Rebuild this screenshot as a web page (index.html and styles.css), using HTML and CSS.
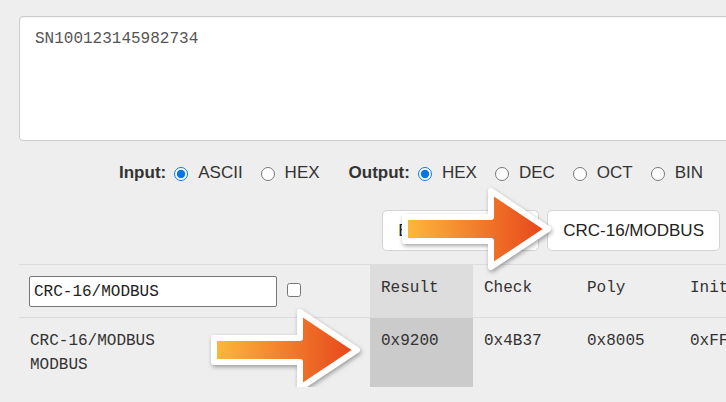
FILE: index.html
```html
<!DOCTYPE html>
<html lang="en">
<head>
<meta charset="utf-8">
<title>CRC Calculator</title>
<link rel="stylesheet" href="styles.css">
</head>
<body>
<div class="page">
  <textarea class="data-input" spellcheck="false">SN100123145982734</textarea>

  <div class="options">
    <div class="group">
      <span class="group-label">Input:</span>
      <label class="opt"><input type="radio" name="in" checked><span>ASCII</span></label>
      <label class="opt"><input type="radio" name="in"><span>HEX</span></label>
    </div>
    <div class="group">
      <span class="group-label">Output:</span>
      <label class="opt"><input type="radio" name="out" checked><span>HEX</span></label>
      <label class="opt"><input type="radio" name="out"><span>DEC</span></label>
      <label class="opt"><input type="radio" name="out"><span>OCT</span></label>
      <label class="opt"><input type="radio" name="out"><span>BIN</span></label>
    </div>
  </div>

  <div class="actions">
    <button class="btn btn-wide">Export Results</button>
    <button class="btn">CRC-16/MODBUS</button>
  </div>

  <table class="results">
    <colgroup>
      <col class="c-name"><col class="c-val"><col class="c-val"><col class="c-val"><col class="c-val"><col class="c-val">
    </colgroup>
    <thead>
      <tr>
        <th class="filter-cell"><div class="filter"><input class="filter-input" type="text" value="CRC-16/MODBUS"><input class="filter-check" type="checkbox"></div></th>
        <th class="hl-head">Result</th>
        <th>Check</th>
        <th>Poly</th>
        <th>Init</th>
        <th>RefIn</th>
      </tr>
    </thead>
    <tbody>
      <tr>
        <td>CRC-16/MODBUS<br>MODBUS</td>
        <td class="hl-cell">0x9200</td>
        <td>0x4B37</td>
        <td>0x8005</td>
        <td>0xFFFF</td>
        <td>true</td>
      </tr>
    </tbody>
  </table>

  <svg class="arrow arrow-top" width="157" height="90" viewBox="-7 -45 157 90" aria-hidden="true">
    <defs>
      <linearGradient id="ag1" x1="0" y1="0" x2="1" y2="0">
        <stop offset="0" stop-color="#fdb93c"/>
        <stop offset="1" stop-color="#e6431b"/>
      </linearGradient>
    </defs>
    <polygon points="0,-12 86,-12 86,-38 143,0 86,38 86,12 0,12" fill="url(#ag1)" stroke="#fff" stroke-width="6" stroke-linejoin="round"/>
  </svg>
  <svg class="arrow arrow-bottom" width="157" height="90" viewBox="-7 -45 157 90" aria-hidden="true">
    <defs>
      <linearGradient id="ag2" x1="0" y1="0" x2="1" y2="0">
        <stop offset="0" stop-color="#fdb93c"/>
        <stop offset="1" stop-color="#e6431b"/>
      </linearGradient>
    </defs>
    <polygon points="0,-12 86,-12 86,-38 143,0 86,38 86,12 0,12" fill="url(#ag2)" stroke="#fff" stroke-width="6" stroke-linejoin="round"/>
  </svg>
</div>
</body>
</html>
```

FILE: styles.css
```css
html, body {
  margin: 0;
  padding: 0;
  background: #eeeeee;
  overflow: hidden;
}

body {
  font-family: "Liberation Sans", Arial, sans-serif;
  color: #333;
}

.page {
  position: relative;
  width: 760px;
  margin-left: 19px;
  padding-top: 16px;
}

.data-input {
  display: block;
  box-sizing: border-box;
  width: 100%;
  height: 125px;
  margin: 0;
  padding: 10px 15px;
  border: 1px solid #cccccc;
  border-radius: 4px;
  background: #fff;
  font-family: "Liberation Mono", "DejaVu Sans Mono", monospace;
  font-size: 16px;
  line-height: 24px;
  color: #555;
  resize: none;
  box-shadow: inset 0 1px 1px rgba(0,0,0,0.05);
}

.options {
  display: flex;
  align-items: center;
  gap: 29px;
  padding-left: 100px;
  margin-top: 22px;
  font-size: 17px;
  line-height: 20px;
}

.group {
  display: flex;
  align-items: center;
  gap: 18px;
}

.group-label {
  font-weight: bold;
  margin-right: -10px;
}

.opt {
  display: flex;
  align-items: center;
  gap: 10px;
}

.opt input {
  width: 14px;
  height: 14px;
  margin: 1px 0 0 0;
  accent-color: #0b74e5;
}

.actions {
  display: flex;
  justify-content: flex-end;
  gap: 8px;
  padding-right: 59px;
  margin-top: 27px;
}

.btn {
  font-family: "Liberation Sans", Arial, sans-serif;
  font-size: 17px;
  line-height: 20px;
  color: #222;
  background: #fff;
  border: 1px solid #d4d4d4;
  border-radius: 5px;
  padding: 10px 15px;
  height: 41px;
}

.btn-wide {
  min-width: 157px;
  text-align: left;
}

.results {
  margin-top: 13px;
  border-collapse: collapse;
  table-layout: fixed;
  width: 866px;
  font-family: "Liberation Mono", "DejaVu Sans Mono", monospace;
  font-size: 16px;
  line-height: 24px;
  color: #333;
}

.c-name { width: 351px; }
.c-val { width: 103px; }

.results th,
.results td {
  text-align: left;
  vertical-align: top;
  font-weight: normal;
  padding: 11px 11px 11px 11px;
  border-top: 1px solid #dcdcdc;
}

.results td { padding-bottom: 10px; }

.results .filter-cell {
  padding: 11px 10px 10px 10px;
}

.filter {
  display: flex;
  align-items: center;
  gap: 10px;
}

.filter-input {
  box-sizing: border-box;
  width: 248px;
  height: 31px;
  margin: 0;
  padding: 0 4px;
  border: 1px solid #767676;
  border-radius: 2px;
  background: #fff;
  font-family: "Liberation Mono", "DejaVu Sans Mono", monospace;
  font-size: 16px;
  color: #222;
}

.filter-check {
  width: 14px;
  height: 14px;
  margin: 0 0 3px 0;
}

.results .hl-head { background: #dddddd; }
.results .hl-cell { background: #cbcbcb; }

.arrow {
  position: absolute;
  filter: drop-shadow(1px 2px 2px rgba(0,0,0,0.35));
}

.arrow-top {
  left: 379px;
  top: 184px;
}

.arrow-bottom {
  left: 188px;
  top: 305px;
}
```
